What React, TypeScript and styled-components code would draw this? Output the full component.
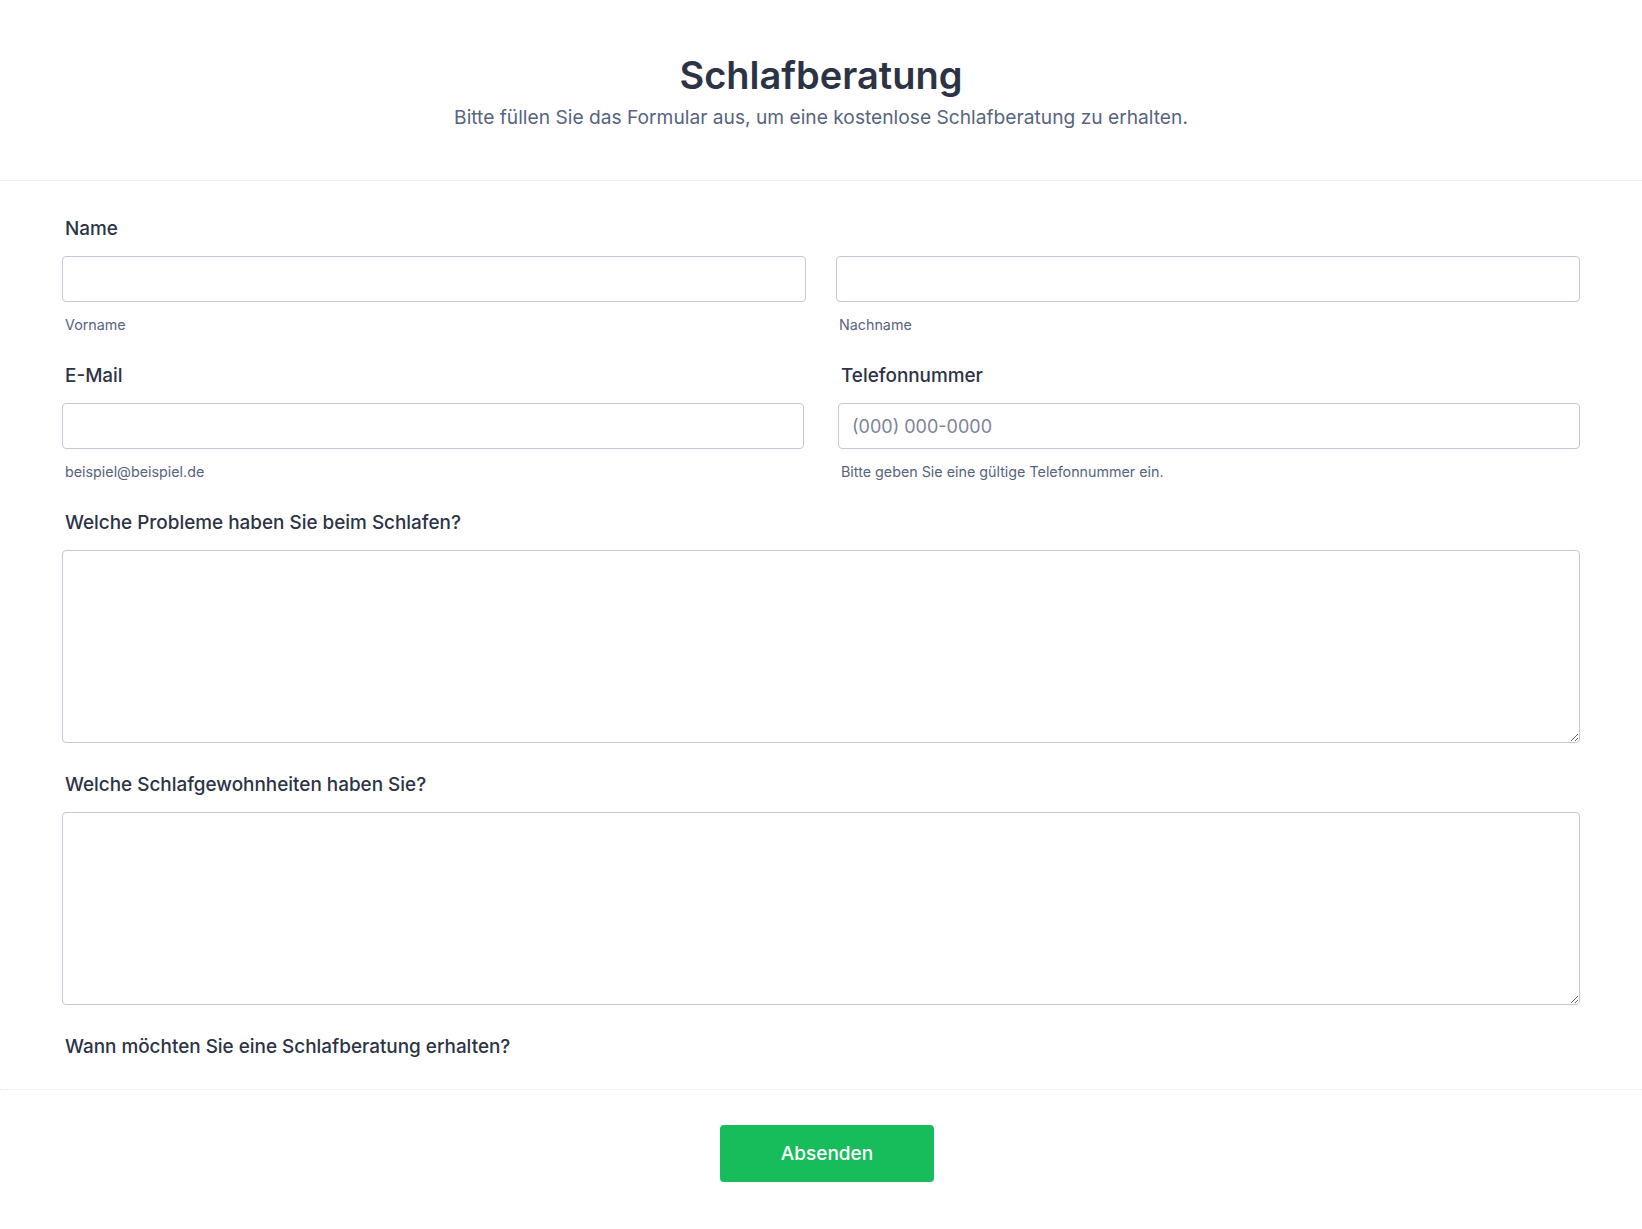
import React from "react";
import styled, { createGlobalStyle } from "styled-components";

const GlobalStyle = createGlobalStyle`
  html, body {
    margin: 0;
    padding: 0;
    background: #ffffff;
    font-family: Inter, "Noto Sans", "Liberation Sans", sans-serif;
    color: #2c3345;
  }
  * { box-sizing: border-box; }
`;

const Page = styled.div`
  width: 100%;
  min-height: 1229px;
  background: #ffffff;
  display: flex;
  flex-direction: column;
`;

const Header = styled.header`
  padding: 52px 62px 49px;
  border-bottom: 1px solid #eceef3;
  display: flex;
  flex-direction: column;
  align-items: center;
  gap: 6px;
`;

const Title = styled.h1`
  margin: 0;
  font-size: 38px;
  line-height: 46px;
  font-weight: 600;
  color: #2c3345;
`;

const Subtitle = styled.p`
  margin: 0;
  font-size: 19.2px;
  line-height: 27px;
  font-weight: 400;
  color: #57647e;
`;

const Form = styled.form`
  display: flex;
  flex-direction: column;
`;

const Fields = styled.div`
  padding: 36px 62px 32px;
  display: flex;
  flex-direction: column;
  gap: 30px;
`;

const Field = styled.div`
  display: flex;
  flex-direction: column;
`;

const Row = styled.div<{ $gap: number }>`
  display: grid;
  grid-template-columns: 1fr 1fr;
  column-gap: ${(p) => p.$gap}px;
`;

const Label = styled.label<{ $flush?: boolean }>`
  display: block;
  font-size: 18.9px;
  line-height: 20px;
  font-weight: 450;
  color: #2c3345;
  padding-top: 2px;
  margin-bottom: ${(p) => (p.$flush ? 0 : 17)}px;
  padding-left: 3px;
`;

const Input = styled.input`
  width: 100%;
  height: 46px;
  border: 1px solid #c3c8d6;
  border-radius: 4px;
  padding: 0 13px;
  font-family: inherit;
  font-size: 18px;
  color: #2c3345;
  background: #ffffff;
  outline: none;
  &::placeholder {
    color: #7c8397;
    font-weight: 400;
  }
`;

const TextArea = styled.textarea`
  width: 100%;
  height: 193px;
  border: 1px solid #c3c8d6;
  border-radius: 4px;
  padding: 10px 13px;
  font-family: inherit;
  font-size: 18px;
  color: #2c3345;
  background: #ffffff;
  outline: none;
  resize: vertical;
  display: block;
`;

const Hint = styled.span`
  display: block;
  margin-top: 14px;
  font-size: 14.3px;
  line-height: 18px;
  color: #57647e;
  padding-left: 3px;
`;

const Footer = styled.div`
  border-top: 1px dotted #e6e8ee;
  padding: 35px 0 47px 12px;
  display: flex;
  justify-content: center;
`;

const SubmitButton = styled.button`
  width: 214px;
  height: 57px;
  border: none;
  border-radius: 4px;
  background: #18bd5b;
  color: #ffffff;
  font-family: inherit;
  font-size: 19px;
  font-weight: 500;
  cursor: pointer;
`;

export default function App() {
  return (
    <Page>
      <GlobalStyle />
      <Header>
        <Title>Schlafberatung</Title>
        <Subtitle>
          Bitte füllen Sie das Formular aus, um eine kostenlose Schlafberatung zu erhalten.
        </Subtitle>
      </Header>
      <Form onSubmit={(e) => e.preventDefault()}>
        <Fields>
          <Field>
            <Label>Name</Label>
            <Row $gap={30}>
              <Field>
                <Input type="text" />
                <Hint>Vorname</Hint>
              </Field>
              <Field>
                <Input type="text" />
                <Hint>Nachname</Hint>
              </Field>
            </Row>
          </Field>
          <Row $gap={34}>
            <Field>
              <Label>E-Mail</Label>
              <Input type="email" />
              <Hint>beispiel@beispiel.de</Hint>
            </Field>
            <Field>
              <Label>Telefonnummer</Label>
              <Input type="tel" placeholder="(000) 000-0000" />
              <Hint>Bitte geben Sie eine gültige Telefonnummer ein.</Hint>
            </Field>
          </Row>
          <Field>
            <Label>Welche Probleme haben Sie beim Schlafen?</Label>
            <TextArea />
          </Field>
          <Field>
            <Label>Welche Schlafgewohnheiten haben Sie?</Label>
            <TextArea />
          </Field>
          <Field>
            <Label $flush>Wann möchten Sie eine Schlafberatung erhalten?</Label>
          </Field>
        </Fields>
        <Footer>
          <SubmitButton type="submit">Absenden</SubmitButton>
        </Footer>
      </Form>
    </Page>
  );
}
